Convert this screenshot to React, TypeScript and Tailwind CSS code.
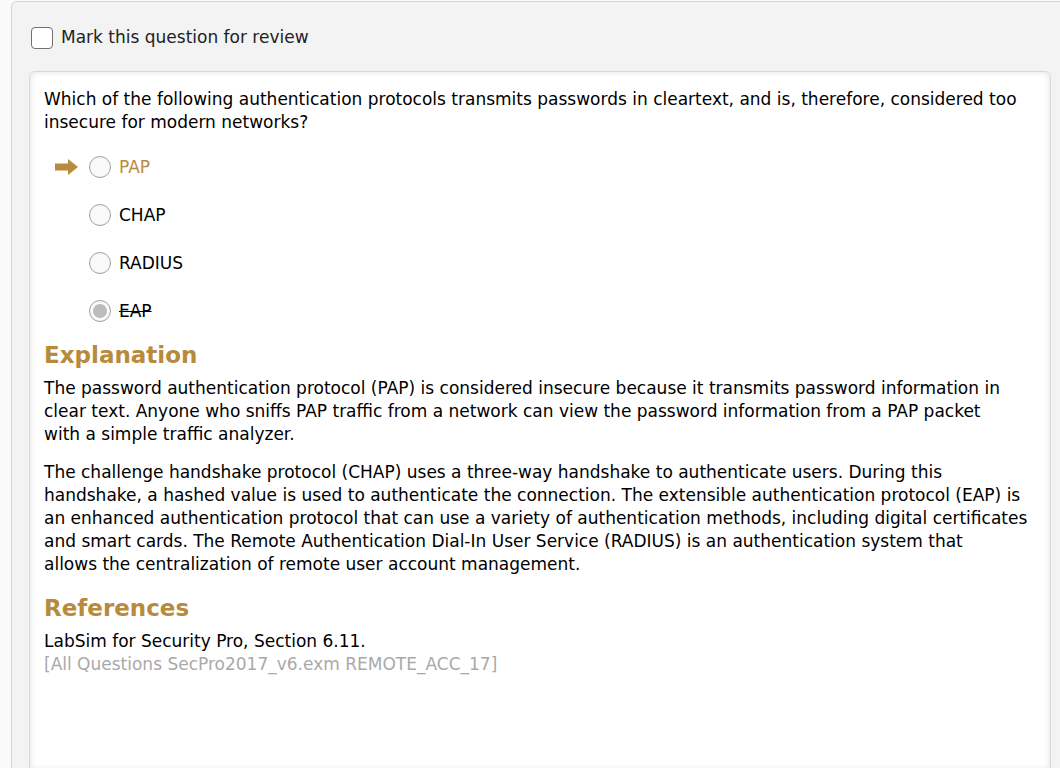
import React from "react";

const GOLD = "text-[#b88a3b]";

const options = [
  { label: "PAP", marked: true },
  { label: "CHAP" },
  { label: "RADIUS" },
  { label: "EAP", struck: true, selected: true },
];

const Arrow = () => (
  <svg width="23" height="16" viewBox="0 0 23 16">
    <path d="M0 4.5h13V0l10 8-10 8v-4.5H0z" fill="#b88a3b" />
  </svg>
);

const Option = ({ label, marked, struck, selected }: { label: string; marked?: boolean; struck?: boolean; selected?: boolean }) => (
  <div className="flex h-[48px] items-center">
    <div className="w-[45px] pl-[11px]">{marked && <Arrow />}</div>
    <div className="flex h-[22px] w-[22px] items-center justify-center rounded-full border border-[#a0a0a0] bg-[#f9f9f9]">
      {selected && <div className="h-[14px] w-[14px] rounded-full bg-[#bcbcbc]" />}
    </div>
    <span className={`ml-[8px] ${marked ? GOLD : "text-black"} ${struck ? "line-through" : ""}`}>{label}</span>
  </div>
);

export default function App() {
  return (
    <div
      className="min-h-[768px] overflow-hidden bg-[#fafafa] pl-[11px] pt-px text-[17px] leading-[23px] text-black"
      style={{ fontFamily: '"DejaVu Sans", sans-serif' }}
    >
      <div className="h-[767px] rounded-tl-md border-l border-t border-[#d4d4d4] bg-[#f3f3f3] pl-[17px] pr-[9px] pt-[24px]">
        <label className="ml-[2px] flex items-center gap-[8px]">
          <span className="h-[22px] w-[22px] rounded-[4px] border border-[#707070] bg-white" />
          <span className="text-[#222]">Mark this question for review</span>
        </label>

        <div className="mt-[22px] h-[700px] rounded-t-md border border-[#d8d8d8] bg-white px-[14px] pt-[16px] shadow-[inset_0_0_6px_rgba(0,0,0,0.12)]">
          <p>
            Which of the following authentication protocols transmits passwords in cleartext, and is, therefore, considered too
            insecure for modern networks?
          </p>

          <div className="mt-[9px]">
            {options.map((o) => (
              <Option key={o.label} {...o} />
            ))}
          </div>

          <h2 className={`mt-[5px] text-[23px] font-bold leading-[30px] ${GOLD}`}>Explanation</h2>
          <p className="mt-[7px]">
            The password authentication protocol (PAP) is considered insecure because it transmits password information in
            <br />
            clear text. Anyone who sniffs PAP traffic from a network can view the password information from a PAP packet
            <br />
            with a simple traffic analyzer.
          </p>
          <p className="mt-[15px]">
            The challenge handshake protocol (CHAP) uses a three-way handshake to authenticate users. During this
            <br />
            handshake, a hashed value is used to authenticate the connection. The extensible authentication protocol (EAP) is
            <br />
            an enhanced authentication protocol that can use a variety of authentication methods, including digital certificates
            <br />
            and smart cards. The Remote Authentication Dial-In User Service (RADIUS) is an authentication system that
            <br />
            allows the centralization of remote user account management.
          </p>

          <h2 className={`mt-[17px] text-[23px] font-bold leading-[30px] ${GOLD}`}>References</h2>
          <p className="mt-[7px]">LabSim for Security Pro, Section 6.11.</p>
          <p className="text-[#a9a9a9]">[All Questions SecPro2017_v6.exm REMOTE_ACC_17]</p>
        </div>
      </div>
    </div>
  );
}
